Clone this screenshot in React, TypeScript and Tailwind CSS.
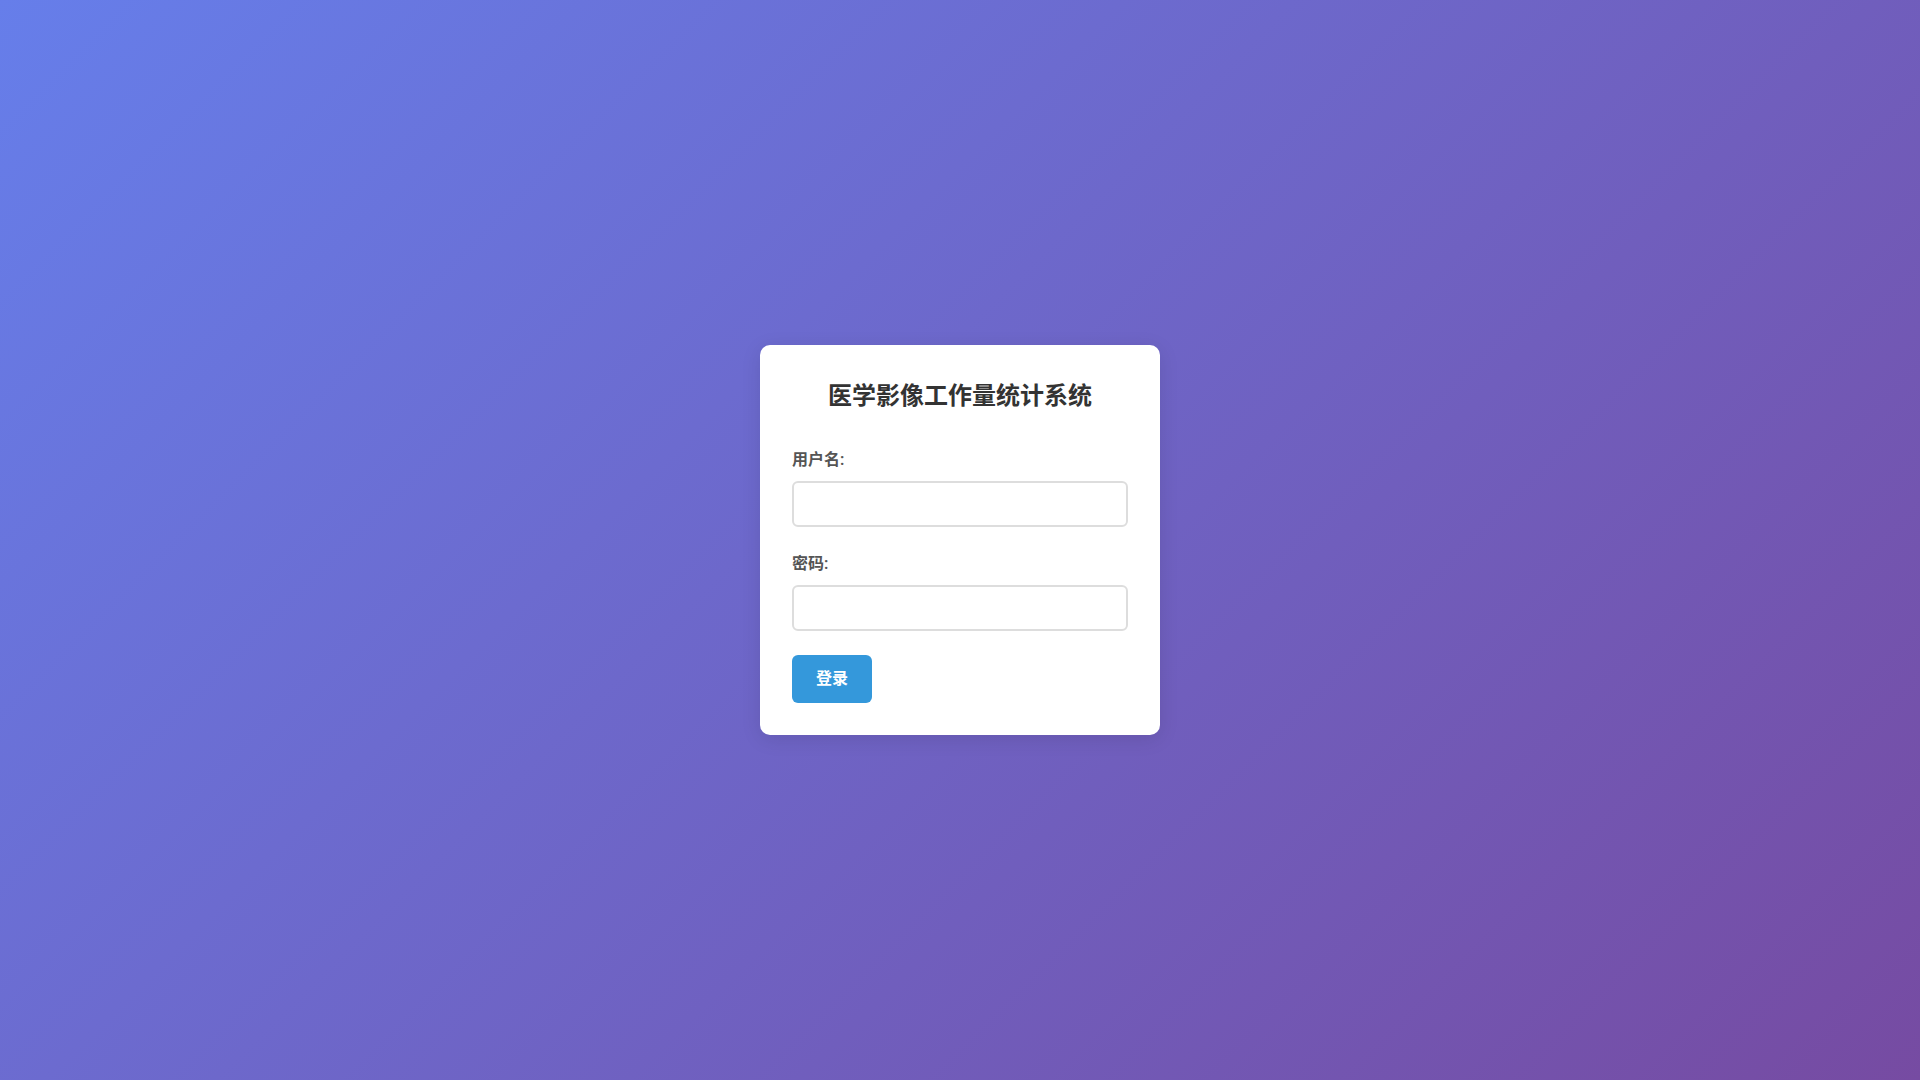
import { useState } from 'react';
import type { FormEvent } from 'react';

const fields = [
  { id: 'username', label: '用户名:', type: 'text', autoComplete: 'username' },
  { id: 'password', label: '密码:', type: 'password', autoComplete: 'current-password' },
];

export default function App() {
  const [values, setValues] = useState<Record<string, string>>({ username: '', password: '' });

  const handleSubmit = (e: FormEvent) => {
    e.preventDefault();
  };

  return (
    <main
      lang="zh-CN"
      className="min-h-screen flex items-center justify-center bg-[linear-gradient(135deg,#667eea_0%,#764ba2_100%)] font-['Roboto','Noto_Sans_CJK_SC',sans-serif]"
    >
      <div className="w-full max-w-[400px] bg-white rounded-[10px] p-8 shadow-[0_4px_20px_rgba(0,0,0,0.1)]">
        <h1 className="mb-8 text-center text-2xl leading-[38px] font-semibold text-[#333]">医学影像工作量统计系统</h1>

        <form onSubmit={handleSubmit}>
          {fields.map(f => (
            <div key={f.id} className="mb-6">
              <label htmlFor={f.id} className="block mb-2 text-base leading-[26px] font-semibold text-[#555]">
                {f.label}
              </label>
              <input
                id={f.id}
                type={f.type}
                autoComplete={f.autoComplete}
                value={values[f.id]}
                onChange={e => setValues({ ...values, [f.id]: e.target.value })}
                className="block w-full h-[46px] px-3 text-base border-2 border-[#ddd] rounded-md focus:outline-none focus:border-[#3498db]"
              />
            </div>
          ))}

          <button
            type="submit"
            className="block h-12 px-6 text-base leading-[26px] font-semibold text-white bg-[#3498db] rounded-md hover:bg-[#2980b9] transition-colors"
          >
            登录
          </button>
        </form>
      </div>
    </main>
  );
}
